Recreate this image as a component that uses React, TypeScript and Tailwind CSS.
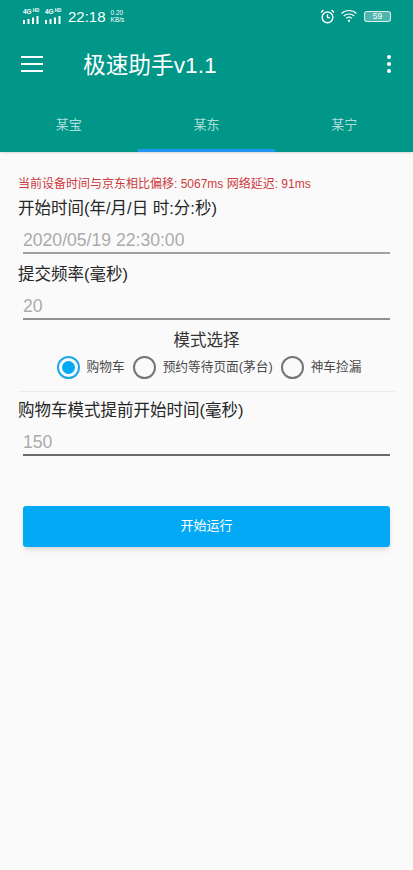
const sans = 'font-["Liberation_Sans","Noto_Sans_CJK_SC",sans-serif]'

function Signal() {
    return (
        <div className="flex flex-col items-start gap-[1px]">
            <div className="flex h-[7px] items-start text-[6.5px] leading-[7px] font-bold">
                4G<span className="ml-[1px] text-[4.5px] leading-[5px]">HD</span>
            </div>
            <svg width="17" height="8" viewBox="0 0 17 8" fill="white">
                <rect x="0" y="4" width="2" height="4" />
                <rect x="4.5" y="3" width="2" height="5" />
                <rect x="9" y="1.5" width="2" height="6.5" />
                <rect x="13.5" y="0" width="2" height="8" />
            </svg>
        </div>
    )
}

function StatusBar() {
    return (
        <div className="flex h-[32px] items-center pl-[23px] pr-[22px] text-white">
            <div className="flex items-center gap-[5px]">
                <Signal />
                <Signal />
            </div>
            <span className="ml-[6px] text-[15px] leading-none">22:18</span>
            <div className="ml-[5px] flex flex-col items-start text-[6.5px] leading-[7px]">
                <span>0.20</span>
                <span>KB/s</span>
            </div>
            <div className="ml-auto flex items-center gap-[5px]">
                <svg width="15" height="15" viewBox="0 0 14 14" fill="none" stroke="white" strokeWidth="1.3">
                    <circle cx="7" cy="7.8" r="5" />
                    <path d="M7 5v3h2.4M1 3.2 3.2 1M13 3.2 10.8 1" />
                </svg>
                <svg width="19" height="14" viewBox="0 0 18 14" fill="none" stroke="white" strokeWidth="1.2">
                    <path d="M1 4.5C5 .5 12 .5 16 4.5M3.2 7C6 4.3 11 4.3 13.8 7M5.6 9.4c1.6-1.3 4.2-1.3 5.8 0" />
                    <circle cx="8.5" cy="11.8" r="1.2" fill="white" stroke="none" />
                </svg>
                <div className="flex h-[11px] w-[27px] items-center justify-center rounded-[3px] border border-white/80 bg-white/30 text-[8.5px] leading-none">
                    59
                </div>
            </div>
        </div>
    )
}

function Field({ label, value, lineClass }: { label: string; value: string; lineClass: string }) {
    return (
        <div>
            <div className="text-[16.5px] leading-[22px] text-[#262626]">{label}</div>
            <div className="mx-[5px] mt-[10px]">
                <div className="text-[17.6px] leading-[23px] text-[#ababab]">{value}</div>
                <div className={lineClass} />
            </div>
        </div>
    )
}

function Radio({ label, checked }: { label: string; checked?: boolean }) {
    return (
        <div className="flex items-center gap-[7px]">
            {checked ? (
                <div className="flex h-[23px] w-[23px] items-center justify-center rounded-full border-[2px] border-[#1ea7e8]">
                    <div className="h-[13px] w-[13px] rounded-full bg-[#03a9f4]" />
                </div>
            ) : (
                <div className="h-[23px] w-[23px] rounded-full border-[2px] border-[#757575]" />
            )}
            <span className="text-[12.7px] text-[#4a4a4a]">{label}</span>
        </div>
    )
}

export default function App() {
    return (
        <div className={`flex h-[870px] w-[413px] flex-col overflow-hidden bg-[#fafafa] ${sans}`}>
            <header className="h-[152px] bg-[#009688] shadow-sm">
                <StatusBar />
                <div className="flex h-[66px] items-center pl-[21px] pr-[22px] text-white">
                    <svg className="mb-[2px]" width="22" height="16" viewBox="0 0 22 16" fill="white">
                        <rect width="22" height="2" y="0" />
                        <rect width="22" height="2" y="7" />
                        <rect width="22" height="2" y="14" />
                    </svg>
                    <h1 className="ml-[40px] text-[22.7px] font-normal leading-none">极速助手v1.1</h1>
                    <div className="mb-[2px] ml-auto flex flex-col gap-[2.5px]">
                        <div className="h-[4.5px] w-[4.5px] rounded-full bg-white" />
                        <div className="h-[4.5px] w-[4.5px] rounded-full bg-white" />
                        <div className="h-[4.5px] w-[4.5px] rounded-full bg-white" />
                    </div>
                </div>
                <div className="grid h-[54px] grid-cols-3 text-[13px] text-white/70">
                    <div className="flex items-center justify-center">某宝</div>
                    <div className="flex items-center justify-center border-b-[3px] border-[#2196f3] pt-[3px]">某东</div>
                    <div className="flex items-center justify-center">某宁</div>
                </div>
            </header>

            <main className="px-[18px] pt-[24px]">
                <div className="text-[12px] leading-[16px] text-[#cc3a3e]">
                    当前设备时间与京东相比偏移: 5067ms 网络延迟: 91ms
                </div>
                <div className="mt-[5px]">
                    <Field label="开始时间(年/月/日 时:分:秒)" value="2020/05/19 22:30:00" lineClass="h-[2px] bg-[#a0a0a0]" />
                </div>
                <div className="mt-[9px]">
                    <Field label="提交频率(毫秒)" value="20" lineClass="h-[2px] bg-[#8f8f8f]" />
                </div>

                <div className="mt-[9px] text-center text-[16.5px] leading-[22px] text-[#333]">模式选择</div>
                <div className="mt-[5px] flex items-center justify-center gap-[8px] pl-[5px]">
                    <Radio label="购物车" checked />
                    <Radio label="预约等待页面(茅台)" />
                    <Radio label="神车捡漏" />
                </div>
                <div className="mt-[12px] h-px bg-[#ececec]" />

                <div className="mt-[7px]">
                    <Field label="购物车模式提前开始时间(毫秒)" value="150" lineClass="h-[1.5px] bg-[#6b6b6b]" />
                </div>

                <button className="mx-[5px] mt-[50px] flex h-[41px] w-[367px] items-center justify-center rounded-[3px] bg-[#03a9f4] text-[13px] text-white shadow-md">
                    开始运行
                </button>
            </main>
        </div>
    )
}
